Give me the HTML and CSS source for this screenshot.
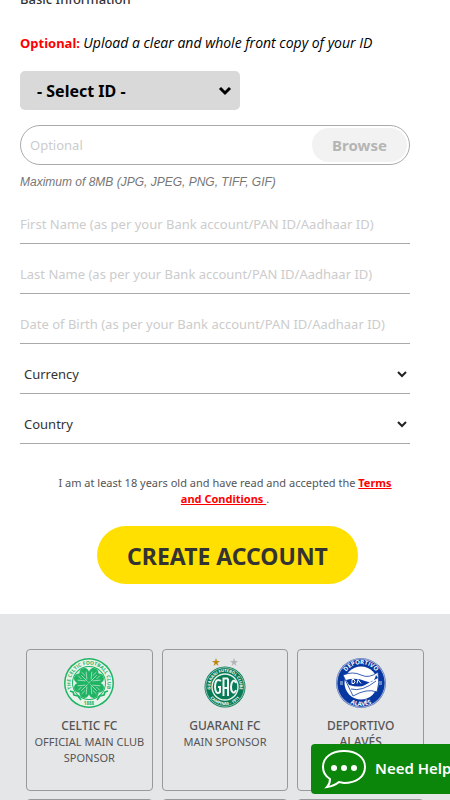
FILE: index.html
```
<!DOCTYPE html>
<html lang="en">
	<head>
		<meta charset="utf-8"/>
		<meta name="viewport" content="width=device-width, initial-scale=1"/>
		<title>Create Account</title>
		<link rel="stylesheet" href="styles.css">
	</head>
	<body>
		<div class="page">
			<form class="register">
				<h2 class="heading">Basic Information</h2>
				<p class="note"><b>Optional:</b> <label for="idType">Upload a clear and whole front copy of your ID</label></p>
				<div class="select select-id">
					<select id="idType">
						<option>- Select ID -</option>
					</select>
					<svg width="14" height="10" viewBox="0 0 14 10"><path d="M2 2l5 5 5-5"/></svg>
				</div>
				<div class="upload">
					<input type="text" placeholder="Optional" aria-label="ID copy"/>
					<button type="button">Browse</button>
				</div>
				<p class="hint">Maximum of 8MB (JPG, JPEG, PNG, TIFF, GIF)</p>
				<div class="field"><input type="text" aria-label="First name" placeholder="First Name (as per your Bank account/PAN ID/Aadhaar ID)"/></div>
				<div class="field"><input type="text" aria-label="Last name" placeholder="Last Name (as per your Bank account/PAN ID/Aadhaar ID)"/></div>
				<div class="field"><input type="text" aria-label="Date of birth" placeholder="Date of Birth (as per your Bank account/PAN ID/Aadhaar ID)"/></div>
				<div class="field select">
					<select aria-label="Currency">
						<option>Currency</option>
					</select>
					<svg width="10" height="8" viewBox="0 0 10 8"><path d="M1 2l4 4 4-4"/></svg>
				</div>
				<div class="field select">
					<select aria-label="Country">
						<option>Country</option>
					</select>
					<svg width="10" height="8" viewBox="0 0 10 8"><path d="M1 2l4 4 4-4"/></svg>
				</div>
				<p class="terms">I am at least 18 years old and have read and accepted the <a href="#">Terms and Conditions </a>.</p>
				<button class="create" type="submit">CREATE ACCOUNT</button>
			</form>

			<div class="sponsors">
				<div class="card">
					<!-- celtic -->
					<svg class="logo" viewBox="0 0 50 50">
						<circle cx="25" cy="25" r="25" fill="#1fb464"/>
						<circle cx="25" cy="25" r="23.500" fill="#e9f3ec"/>
						<circle cx="25" cy="25" r="17" fill="#1fb464"/>
						<circle cx="25" cy="25" r="16" fill="#e5f0e9"/>
						<g fill="#1fb464">
							<g id="leaf" transform="rotate(45 25 25)">
								<path d="M25 24.500C19 21 15.500 17 16.500 13C18 9 23 9 25 11.500C27 9 32 9 33.500 13C34.500 17 31 21 25 24.500Z"/>
								<path d="M25 23V14M24 21l-5-6M26 21l5-6M22.500 17v-5M27.500 17v-5" stroke="#e5f0e9" stroke-width=".6" fill="none"/>
							</g>
							<use href="#leaf" transform="rotate(90 25 25)"/>
							<use href="#leaf" transform="rotate(180 25 25)"/>
							<use href="#leaf" transform="rotate(270 25 25)"/>
						</g>
						<path d="M25 25q0 7 2 13" stroke="#1fb464" stroke-width="1.200" fill="none"/>
						<path d="M6 33l3 1 1 3 4 1 3 4M44 33l-3 1-1 3-4 1-3 4" stroke="#1fb464" stroke-width="1.600" fill="none"/>
						<path id="celticArc" d="M7.500 31A18.500 18.500 0 1 1 42.500 31" fill="none"/>
						<text class="crest" font-size="5" fill="#1fb464"><textPath href="#celticArc" startOffset="50%">THE CELTIC FOOTBALL CLUB</textPath></text>
						<text class="crest" x="25" y="47" font-size="4.500" fill="#1fb464">1888</text>
					</svg>
					<h3>CELTIC FC</h3>
					<p>OFFICIAL MAIN CLUB SPONSOR</p>
				</div>
				<div class="card">
					<!-- guarani -->
					<svg class="logo" viewBox="0 0 50 50">
						<path d="M16 0l1 3h3l-2.500 2 1 3-2.500-2-2.500 2 1-3-2.500-2h3z" fill="#bd8712"/>
						<path d="M34 0l1 3h3l-2.500 2 1 3-2.500-2-2.500 2 1-3-2.500-2h3z" fill="#b5b5b5"/>
						<circle cx="25" cy="29" r="20.500" fill="#087b56"/>
						<circle cx="25" cy="29" r="19.300" fill="none" stroke="#e5f0e9" stroke-width=".6"/>
						<circle cx="25" cy="29" r="13" fill="none" stroke="#e5f0e9" stroke-width="1.400"/>
						<g fill="none" stroke="#f1f5f3" stroke-width="2">
							<path d="M21 23C16 20 15 25 15 29S17 37 20 34V29H18"/>
							<path d="M23.500 38V20.500H28M23.500 30H28M28 20.500V38"/>
							<path d="M36 25C34 20 31 24 31 29S34 37 36 32"/>
						</g>
						<path id="guaraniTop" d="M10.500 31A14.700 14.700 0 1 1 39.500 31" fill="none"/>
						<path id="guaraniBottom" d="M7 32A18.300 18.300 0 0 0 43 32" fill="none"/>
						<text class="crest" font-size="4" fill="#fff"><textPath href="#guaraniTop" startOffset="50%">GUARANI FUTEBOL CLUBE</textPath></text>
						<text class="crest" font-size="4" fill="#fff"><textPath href="#guaraniBottom" startOffset="50%">CAMPINAS - 1911</textPath></text>
					</svg>
					<h3>GUARANI FC</h3>
					<p>MAIN SPONSOR</p>
				</div>
				<div class="card">
					<!-- alaves -->
					<svg class="logo" viewBox="0 0 50 50">
						<circle cx="25" cy="25" r="25" fill="#5873b8"/>
						<circle cx="25" cy="25" r="24" fill="none" stroke="#d5dced" stroke-width=".6"/>
						<circle cx="25" cy="25" r="23.500" fill="#0737a0"/>
						<circle cx="25" cy="25" r="16.500" fill="#fff"/>
						<path d="M7 17Q17 13 25 17T42 14Q44 25 41 34Q31 30 18 38L16 37Z" fill="#fff"/>
						<path d="M10 22Q20 19 29 23T40 17L42 20Q34 24 29 27T13 27Z" fill="#0737a0"/>
						<path d="M7 17L17 38M7 17Q17 13 25 17T42 14Q44 25 41 34Q31 30 17 38M15 31Q26 34 40 23" stroke="#0737a0" stroke-width=".8" fill="none"/>
						<path d="M16 21.500v4h2q2-2 0-4zM21 25.500l1-4 3 4" stroke="#fff" fill="none"/>
						<path d="M4 24h3M4 26h3M43 24h3M43 26h3" stroke="#fff" stroke-width=".8"/>
						<path id="alavesTop" d="M7 24A18 18 0 0 1 43 24" fill="none"/>
						<path id="alavesBottom" d="M3 26A22 22 0 0 0 47 26" fill="none"/>
						<text class="crest" font-size="6" fill="#fff"><textPath href="#alavesTop" startOffset="50%">DEPORTIVO</textPath></text>
						<text class="crest" font-size="6" fill="#fff"><textPath href="#alavesBottom" startOffset="50%">ALAVÉS</textPath></text>
					</svg>
					<h3>DEPORTIVO ALAVÉS</h3>
				</div>
				<div class="card"></div>
				<div class="card"></div>
				<div class="card"></div>
			</div>
		</div>

		<button class="help" type="button">
			<svg width="46" height="42" viewBox="0 0 46 42">
				<path d="M9 31C4 28 2 24 2 19C2 9 11 3 23 3S44 9 44 19S35 35 23 35L18 34Q13 38 6 39Q9 36 9 31Z" fill="none" stroke="#fff" stroke-width="2"/>
				<g fill="#fff">
					<circle cx="13" cy="20" r="3"/>
					<circle cx="23" cy="20" r="3"/>
					<circle cx="33" cy="20" r="3"/>
				</g>
			</svg>
			<span>Need Help</span>
		</button>
	</body>
</html>
```

FILE: styles.css
```
* {
	margin: 0;
	padding: 0;
	box-sizing: border-box;
}

body {
	font-family: "Noto Sans", "Open Sans", sans-serif;
	font-size: 13px;
	color: #333;
	background: #fff;
}

input, select, button {
	font-family: inherit;
	font-size: 13px;
	border: 0;
	background: none;
	outline: none;
}

.page {
	height: 100vh;
	overflow: hidden;
}

/* form */
.register {
	padding: 0 40px 30px 20px;
}

.heading {
	margin-top: -11px;
	font-size: 13px;
	font-weight: 500;
	line-height: 20px;
}

.note {
	margin: 24px 0 18px;
	line-height: 20px;
	color: #000;
}

.note b {
	color: #f00;
}

.note label {
	font-family: "Open Sans", sans-serif;
	font-size: 14px;
	font-style: italic;
}

.select {
	position: relative;
}

.select select {
	width: 100%;
	height: 100%;
	padding-left: 4px;
	appearance: none;
	color: #333;
}

/* arrow over the drop-down */
.select svg {
	position: absolute;
	top: 50%;
	right: 3px;
	transform: translateY(-50%);
	fill: none;
	stroke: #222;
	stroke-width: 2;
	pointer-events: none;
}

.select-id {
	width: 220px;
	height: 39px;
	border-radius: 5px;
	background: #d9d9d9;
}

.select-id select {
	padding-left: 17px;
	font-size: 16px;
	font-weight: 700;
	color: #000;
}

.select-id svg {
	right: 8px;
	stroke: #000;
	stroke-width: 3;
}

.upload {
	display: flex;
	height: 40px;
	margin-top: 15px;
	padding: 2px 2px 2px 9px;
	border: 1px solid #aaa;
	border-radius: 20px;
}

.upload input {
	flex: 1;
	min-width: 0;
}

.upload button {
	width: 95px;
	border-radius: 17px;
	background: #f2f2f2;
	font-size: 15px;
	font-weight: 700;
	color: #b5b5b5;
}

::placeholder {
	color: #ccc;
	opacity: 1;
}

.hint {
	margin: 7px 0 12px;
	font-family: "Liberation Sans", Arial, sans-serif;
	font-size: 12px;
	font-style: italic;
	line-height: 20px;
	color: #777;
}

.field {
	height: 40px;
	margin-bottom: 10px;
	border-bottom: 1px solid #aaa;
}

.field input {
	width: 100%;
	height: 100%;
}

.terms {
	margin: 31px 0 19px 20px;
	padding: 0 10px;
	font-size: 11px;
	line-height: 16px;
	text-align: center;
	color: #555;
}

.terms a {
	font-weight: 700;
	color: #f00;
}

.create {
	display: block;
	width: 261px;
	height: 58px;
	margin-left: 77px;
	padding-top: 2px;
	border-radius: 29px;
	background: #ffe000;
	font-size: 23px;
	font-weight: 700;
	color: #333;
}

/* sponsors */
.sponsors {
	display: grid;
	grid-template-columns: repeat(3, 1fr);
	gap: 8px 9px;
	padding: 35px 26px;
	background: #e5e6e8;
}

.card {
	min-height: 142px;
	padding: 8px 6px;
	border: 1px solid #999;
	border-radius: 4px;
	font-size: 11px;
	line-height: 16px;
	text-align: center;
	color: #555;
}

.logo {
	display: block;
	width: 50px;
	height: 50px;
	margin: 0 auto 10px;
}

.crest {
	font-family: "Open Sans", sans-serif;
	font-weight: 700;
	text-anchor: middle;
}

.card h3 {
	padding: 0 4px;
	font-size: 12px;
	font-weight: 500;
	line-height: 16px;
}

/* chat button */
.help {
	position: fixed;
	left: 311px;
	right: 0;
	bottom: 6px;
	display: flex;
	align-items: center;
	gap: 8px;
	height: 50px;
	padding-left: 10px;
	overflow: hidden;
	border-radius: 4px 0 0 4px;
	background: #0b860b;
	font-size: 15px;
	font-weight: 600;
	white-space: nowrap;
	color: #fff;
}

.help svg {
	flex: none;
}

.help span {
	padding-bottom: 3px;
}
```
